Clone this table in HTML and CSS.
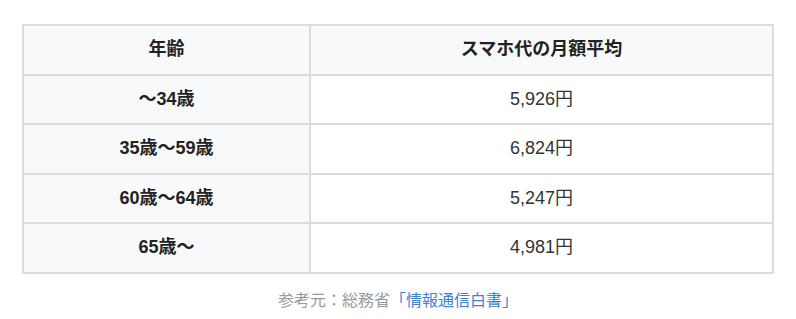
FILE: index.html
```html
<!DOCTYPE html>
<html lang="ja">
<head>
<meta charset="utf-8">
<link rel="stylesheet" href="styles.css">
</head>
<body>
<div class="wrap">
  <table class="price-table">
    <colgroup><col class="c1"><col class="c2"></colgroup>
    <thead>
      <tr><th>年齢</th><th>スマホ代の月額平均</th></tr>
    </thead>
    <tbody>
      <tr><th>～34歳</th><td>5,926円</td></tr>
      <tr><th>35歳～59歳</th><td>6,824円</td></tr>
      <tr><th>60歳～64歳</th><td>5,247円</td></tr>
      <tr><th>65歳～</th><td>4,981円</td></tr>
    </tbody>
  </table>
  <p class="source">参考元：総務省<a href="#">「情報通信白書」</a></p>
</div>
</body>
</html>
```
FILE: styles.css
```css
html, body {
  margin: 0;
  padding: 0;
  background: #fff;
}
body {
  font-family: "Liberation Sans", Arial, "Noto Sans CJK JP", sans-serif;
  color: #222;
}
.wrap {
  padding: 24px 22px 0;
}
.price-table {
  width: 752px;
  table-layout: fixed;
  border-collapse: separate;
  border-spacing: 0;
  border: 1px solid #dcdcdc;
  font-size: 18px;
  line-height: 27px;
}
.c1 { width: 287px; }
.price-table th,
.price-table td {
  border: 1px solid #dcdcdc;
  padding: 10px 10px 10.5px;
  text-align: center;
  vertical-align: middle;
}
.price-table th {
  background: #f8f9fa;
  font-weight: bold;
  color: #222;
}
.price-table td {
  background: #fff;
  font-weight: normal;
  color: #333;
}
.source {
  margin: 13px 0 0;
  text-align: center;
  font-size: 16px;
  line-height: 24px;
  color: #999;
  font-family: "Noto Sans CJK JP", sans-serif;
}
.source a {
  color: #3f7fe0;
  text-decoration: none;
}
```
